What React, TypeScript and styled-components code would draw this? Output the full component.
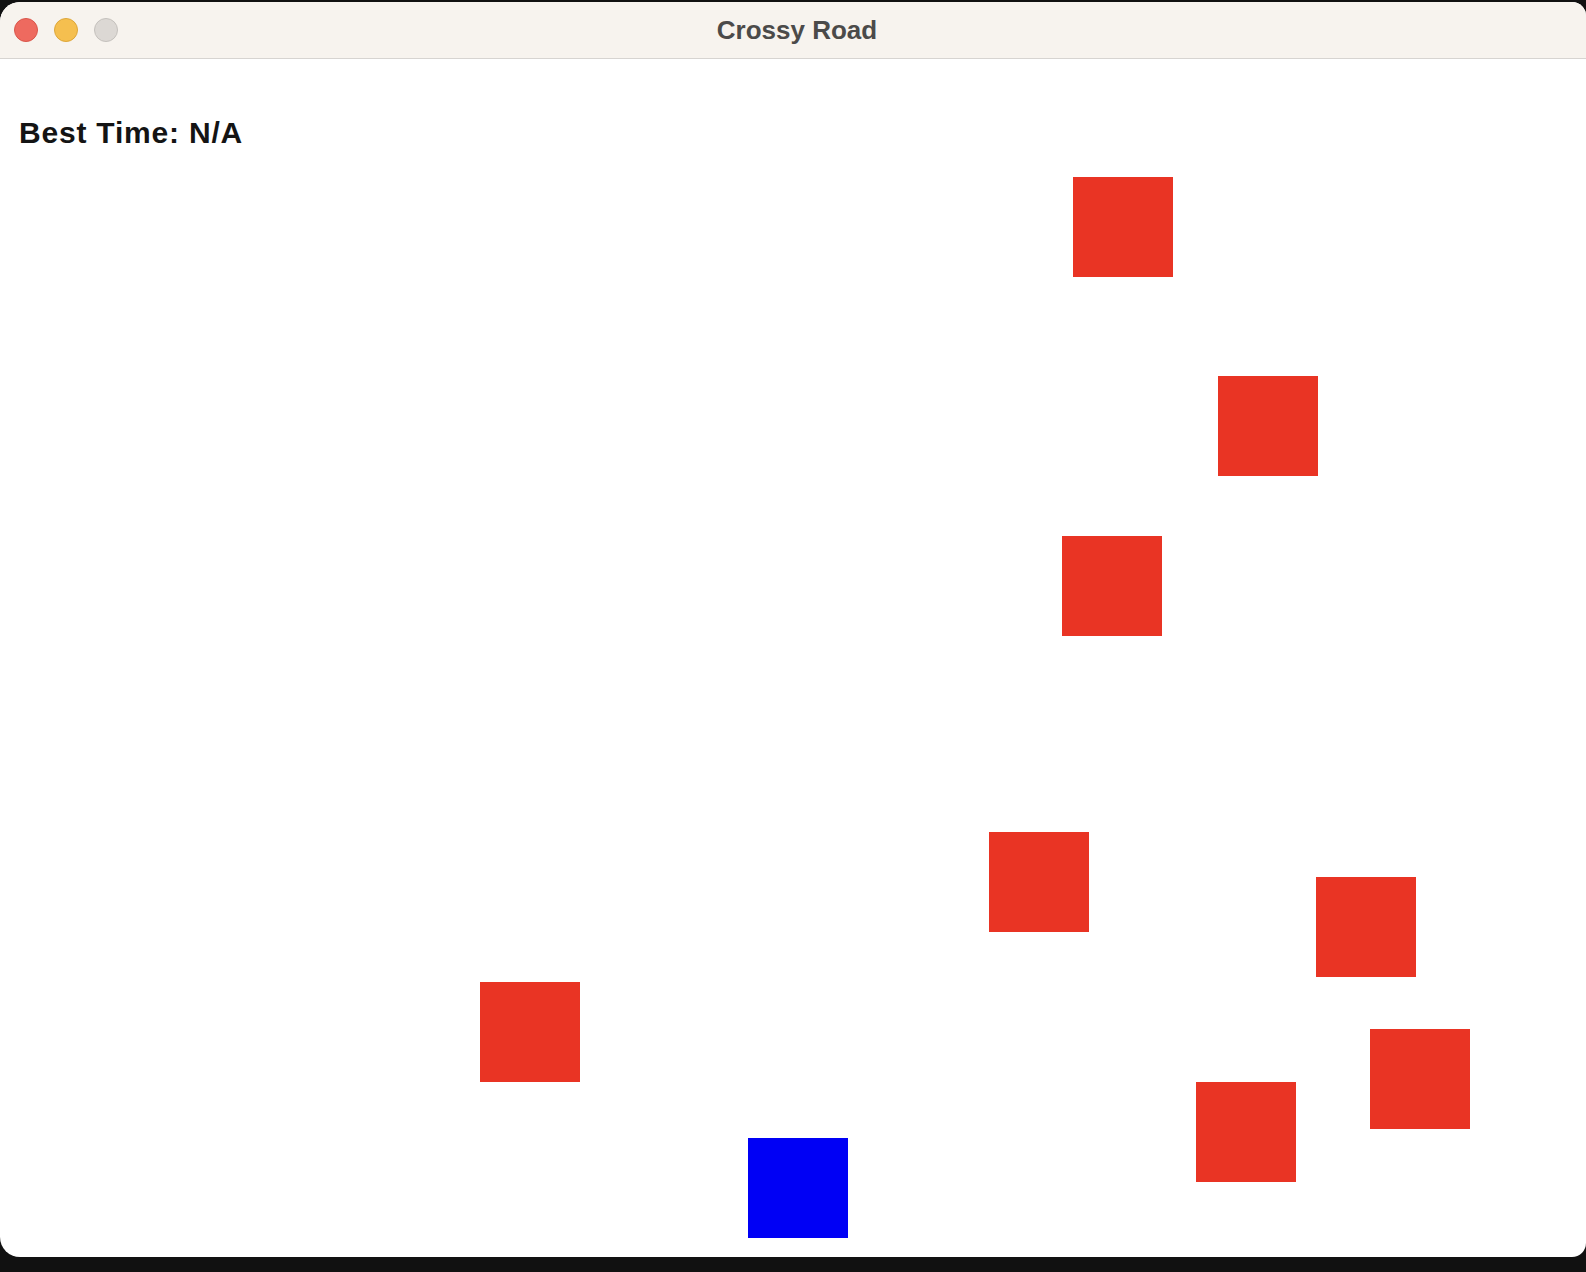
import React from 'react'
import styled, { createGlobalStyle } from 'styled-components';

const GlobalStyle = createGlobalStyle`
html, body {
  margin: 0;
  padding: 0;
  background: #111111;
  overflow: hidden;
}
body {
  font-family: "Liberation Sans", Arial, sans-serif;
}
`;

const Screen = styled.div`
width: 1586px;
height: 1272px;
padding-top: 2px;
box-sizing: border-box;
`;

const Window = styled.div`
width: 1586px;
height: 1255px;
display: flex;
flex-direction: column;
background: #ffffff;
border-radius: 20px 14px 14px 20px;
overflow: hidden;
`;

const TitleBar = styled.div`
height: 56px;
flex-shrink: 0;
display: flex;
align-items: center;
position: relative;
background: #f7f3ee;
border-bottom: 1px solid #d7d4d1;
`;

const Lights = styled.div`
display: flex;
gap: 16px;
padding-left: 14px;
`;

interface LightProps {
  color: string;
  edge: string;
}

const Light = styled.div<LightProps>`
width: 24px;
height: 24px;
border-radius: 50%;
box-sizing: border-box;
background: ${({color}) => color};
border: 1px solid ${({edge}) => edge};
`;

const Title = styled.div`
position: absolute;
left: 8px;
right: 0;
text-align: center;
font-family: "Liberation Sans", Arial, sans-serif;
font-weight: 700;
font-size: 26px;
color: #4b4a49;
pointer-events: none;
`;

const Canvas = styled.div`
flex: 1;
position: relative;
padding: 59px 20px 0 19px;
`;

const BestTime = styled.div`
font-family: "Liberation Sans", Arial, sans-serif;
font-weight: 700;
font-size: 30px;
line-height: 30px;
letter-spacing: 0.8px;
color: #141414;
`;

interface BlockProps {
  fill: string;
}

const Block = styled.div<BlockProps>`
position: absolute;
width: 100px;
height: 100px;
background: ${({fill}) => fill};
`;

// window content starts at y=59 on screen
const cars = [
  { x: 1073, y: 177 },
  { x: 1218, y: 376 },
  { x: 1062, y: 536 },
  { x: 989, y: 832 },
  { x: 1316, y: 877 },
  { x: 480, y: 982 },
  { x: 1370, y: 1029 },
  { x: 1196, y: 1082 },
];

const player = { x: 748, y: 1138 };

function App() {
  return (
    <>
      <GlobalStyle />
      <Screen>
        <Window>
          <TitleBar>
            <Lights>
              <Light color="#ee6a5f" edge="#d9564b" />
              <Light color="#f5bf4f" edge="#dca63a" />
              <Light color="#dcd8d4" edge="#c4c0bc" />
            </Lights>
            <Title>Crossy Road</Title>
          </TitleBar>
          <Canvas>
            <BestTime>Best Time: N/A</BestTime>
            {cars.map((c, i) => (
              <Block key={i} fill="#e93424" style={{ left: c.x, top: c.y - 59 }} />
            ))}
            <Block fill="#0000f5" style={{ left: player.x, top: player.y - 59 }} />
          </Canvas>
        </Window>
      </Screen>
    </>
  )
}

export default App
